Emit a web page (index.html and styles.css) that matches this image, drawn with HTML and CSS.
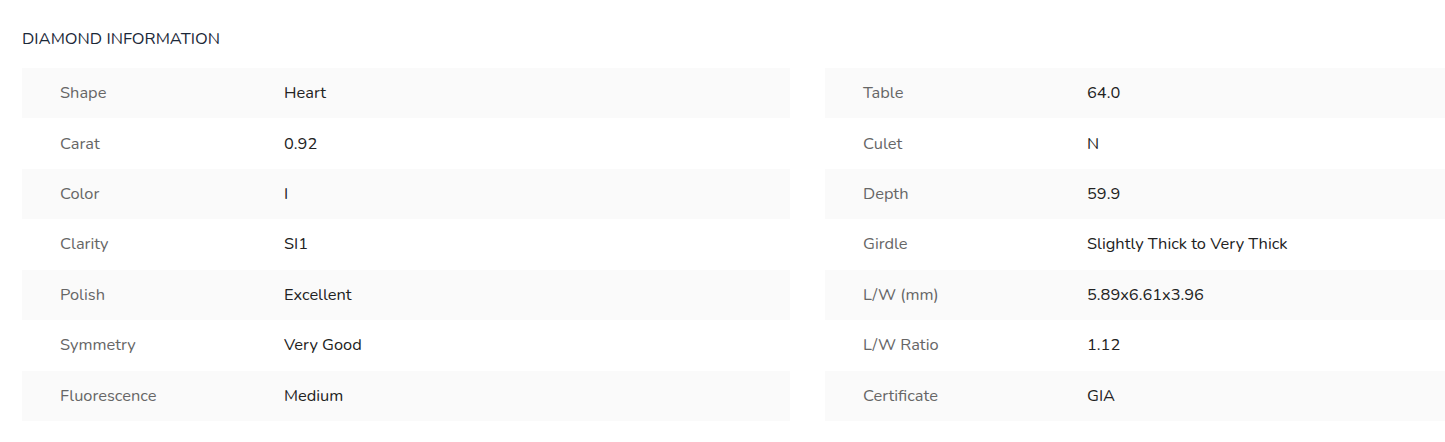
FILE: index.html
```html
<!DOCTYPE html>
<html lang="en">
<head>
<meta charset="utf-8">
<title>Diamond Information</title>
<link rel="stylesheet" href="styles.css">
</head>
<body>
<section class="info">
  <h2 class="info-title">DIAMOND INFORMATION</h2>
  <div class="info-grid">
    <div class="spec-table">
      <div class="spec-row"><span class="spec-label">Shape</span><span class="spec-value">Heart</span></div>
      <div class="spec-row"><span class="spec-label">Carat</span><span class="spec-value">0.92</span></div>
      <div class="spec-row"><span class="spec-label">Color</span><span class="spec-value">I</span></div>
      <div class="spec-row"><span class="spec-label">Clarity</span><span class="spec-value">SI1</span></div>
      <div class="spec-row"><span class="spec-label">Polish</span><span class="spec-value">Excellent</span></div>
      <div class="spec-row"><span class="spec-label">Symmetry</span><span class="spec-value">Very Good</span></div>
      <div class="spec-row"><span class="spec-label">Fluorescence</span><span class="spec-value">Medium</span></div>
    </div>
    <div class="spec-table spec-table-right">
      <div class="spec-row"><span class="spec-label">Table</span><span class="spec-value">64.0</span></div>
      <div class="spec-row"><span class="spec-label">Culet</span><span class="spec-value">N</span></div>
      <div class="spec-row"><span class="spec-label">Depth</span><span class="spec-value">59.9</span></div>
      <div class="spec-row"><span class="spec-label">Girdle</span><span class="spec-value">Slightly Thick to Very Thick</span></div>
      <div class="spec-row"><span class="spec-label">L/W (mm)</span><span class="spec-value">5.89x6.61x3.96</span></div>
      <div class="spec-row"><span class="spec-label">L/W Ratio</span><span class="spec-value">1.12</span></div>
      <div class="spec-row"><span class="spec-label">Certificate</span><span class="spec-value">GIA</span></div>
    </div>
  </div>
</section>
</body>
</html>
```

FILE: styles.css
```css
html, body {
  margin: 0;
  padding: 0;
  background: #ffffff;
}
body {
  font-family: "Nunito", "Open Sans", "Liberation Sans", sans-serif;
  font-size: 16.4px;
  overflow: hidden;
}
.info {
  padding: 28px 0 0 22px;
}
.info-title {
  margin: 0;
  font-size: 16.6px;
  font-weight: 400;
  line-height: 22px;
  color: #1b2838;
}
.info-grid {
  display: flex;
  gap: 35px;
  margin-top: 18px;
}
.spec-table {
  width: 768px;
  flex: none;
}
.spec-table-right {
  flex: 1;
  width: auto;
}
.spec-row {
  box-sizing: border-box;
  display: flex;
  align-items: center;
  height: 50.43px;
  padding: 0 0 1px 38px;
}
.spec-row:nth-child(odd) {
  background: #fafafa;
}
.spec-label {
  width: 224px;
  flex: none;
  color: #666666;
}
.spec-value {
  color: #222222;
}
```
